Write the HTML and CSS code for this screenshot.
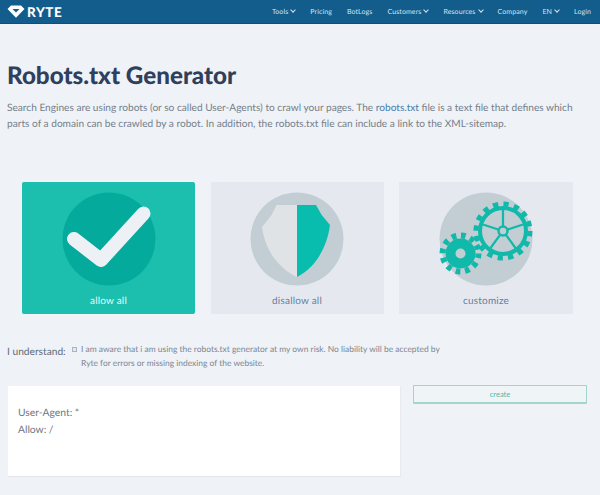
FILE: index.html
```html
<!DOCTYPE html>
<html lang="en">
<head>
<meta charset="utf-8">
<title>Robots.txt Generator</title>
<link rel="stylesheet" href="styles.css">
</head>
<body>
<header class="topbar">
  <a class="logo">
    <svg class="logo-mark" viewBox="0 0 18 13"><path d="M0.5 4 4 0.5H14L17.500 4 9 12.700Z" fill="#fff"/><path d="M5.500 4 9 7.500 12.500 4Z" fill="#135d8d"/></svg>
    <span class="logo-text">RYTE</span>
  </a>
  <nav class="nav">
    <span class="nav-item caret">Tools</span>
    <span class="nav-item">Pricing</span>
    <span class="nav-item">BotLogs</span>
    <span class="nav-item caret">Customers</span>
    <span class="nav-item caret">Resources</span>
    <span class="nav-item">Company</span>
    <span class="nav-item caret">EN</span>
    <span class="nav-item">Login</span>
  </nav>
</header>
<main class="page">
  <h1 class="title">Robots.txt Generator</h1>
  <p class="intro">Search Engines are using robots (or so called User-Agents) to crawl your pages. The <a class="link">robots.txt</a> file is a text file that defines which parts of a domain can be crawled by a robot. In addition, the robots.txt file can include a link to the XML-sitemap.</p>
  <section class="cards">
    <div class="card card-active">
      <svg class="card-icon" viewBox="0 0 94 94"><circle cx="47" cy="47" r="46.500" fill="#04ab9c"/><path d="M12 47 39 68 81.500 21.500" fill="none" stroke="#edf0f4" stroke-width="14" stroke-linecap="round" stroke-linejoin="round"/></svg>
      <span class="card-label">allow all</span>
    </div>
    <div class="card">
      <svg class="card-icon" viewBox="0 0 94 94"><circle cx="47" cy="47" r="46.500" fill="#c3cdd4"/><path d="M47 13H26.500L21.500 23 12 35C15 58 28 76 47 85Z" fill="#e0e3e6"/><path d="M47 13H66L71.700 23 80 33C77 56 65 76 47 85Z" fill="#08bdae"/></svg>
      <span class="card-label">disallow all</span>
    </div>
    <div class="card">
      <svg class="card-icon" viewBox="0 0 94 94">
        <circle cx="47" cy="47" r="46.500" fill="#c3cdd4"/>
        <g fill="none" stroke="#10b9a9">
          <circle cx="64" cy="39" r="23" stroke-width="4"/>
          <circle cx="64" cy="39" r="27" stroke-width="5" stroke-dasharray="5.300 5.300"/>
          <circle cx="64" cy="39" r="4.500" stroke-width="2.500"/>
          <path d="M64 34V18M68.800 37.500 84 32.500M67 43 76.500 56M61 43 51.500 56M59.200 37.500 44 32.500" stroke-width="2.200"/>
          <circle cx="21.500" cy="61.500" r="10" stroke-width="10"/>
          <circle cx="21.500" cy="61.500" r="18" stroke-width="6" stroke-dasharray="4.700 4.720"/>
        </g>
      </svg>
      <span class="card-label">customize</span>
    </div>
  </section>
  <section class="consent">
    <span class="consent-label">I understand:</span>
    <span class="checkbox"></span>
    <p class="consent-text">I am aware that i am using the robots.txt generator at my own risk. No liability will be accepted by Ryte for errors or missing indexing of the website.</p>
  </section>
  <section class="output">
    <div class="result">User-Agent: *<br>Allow: /</div>
    <button class="create" type="button">create</button>
  </section>
</main>
</body>
</html>
```
FILE: styles.css
```css
* { box-sizing: border-box; }
html, body { margin: 0; height: 100%; }
body {
  background: #eff2f6;
  font-family: "Lato", "Open Sans", sans-serif;
  color: #6f7b88;
  overflow: hidden;
  text-rendering: geometricPrecision;
}
.topbar {
  height: 24px;
  background: #135d8d;
  border-bottom: 1px solid #0f5079;
  display: flex;
  align-items: center;
  justify-content: space-between;
  padding: 0 9px 0 7px;
}
.logo { display: flex; align-items: center; gap: 2px; }
.logo-mark { width: 18px; height: 13px; }
.logo-text { color: #fff; font-weight: 900; font-size: 13.500px; letter-spacing: 0.6px; }
.nav { display: flex; gap: 15px; }
.nav-item { color: #d5e3ec; font-size: 7px; line-height: 20px; letter-spacing: 0.1px; }
.caret::after {
  content: "";
  display: inline-block;
  width: 3px;
  height: 3px;
  margin: 0 0 2px 3px;
  border-right: 1px solid #d5e3ec;
  border-bottom: 1px solid #d5e3ec;
  transform: rotate(45deg);
}
.page { padding: 0 7px; }
.title {
  margin: 36px 0 0;
  font-size: 24.200px;
  line-height: 32px;
  font-weight: 900;
  color: #2f3f5c;
}
.intro {
  margin: 8px 0 0;
  width: 575px;
  font-size: 10.150px;
  line-height: 16px;
  color: #757f8b;
}
.link { color: #3f7fb0; }
.cards {
  display: grid;
  grid-template-columns: 173px 173px 174px;
  gap: 15.500px;
  margin: 50px 0 0 15px;
}
.card {
  height: 132px;
  background: #e5e9ef;
  display: flex;
  flex-direction: column;
  align-items: center;
  padding-top: 10px;
}
.card-active { background: #1cbfae; border-radius: 2px; }
.card-icon { width: 94px; height: 94px; overflow: visible; display: block; }
.card-label { margin-top: 8px; font-size: 10px; line-height: 14px; color: #667f9e; letter-spacing: 0.2px; }
.card-active .card-label { color: #e9f8f6; }
.consent { display: flex; align-items: flex-start; margin-top: 28px; }
.consent-label { font-size: 10.200px; line-height: 18px; margin-top: 1px; width: 65px; color: #5f6b78; white-space: nowrap; }
.checkbox {
  width: 5px;
  height: 5px;
  margin-top: 5px;
  border: 1px solid #aab4bd;
  background: #e5e9ef;
}
.consent-text {
  margin: 0 0 0 4px;
  width: 362px;
  font-size: 8.450px;
  line-height: 14px;
  color: #7b8692;
}
.output { display: flex; align-items: flex-start; gap: 12px; margin: 16px 0 0 1px; }
.result {
  width: 393px;
  height: 91px;
  background: #fff;
  border-bottom: 1px solid #e2e5e8;
  border-right: 1px solid #e8ebee;
  padding: 19px 10px;
  font-size: 10.300px;
  line-height: 17px;
  color: #6f7680;
}
.create {
  width: 174px;
  height: 19px;
  margin-top: -1px;
  background: #eff4f6;
  border: 1px solid #a3d5cf;
  border-bottom-width: 2px;
  border-radius: 1px;
  font-family: inherit;
  font-size: 7.500px;
  color: #53b7a8;
  padding: 0;
}
```
